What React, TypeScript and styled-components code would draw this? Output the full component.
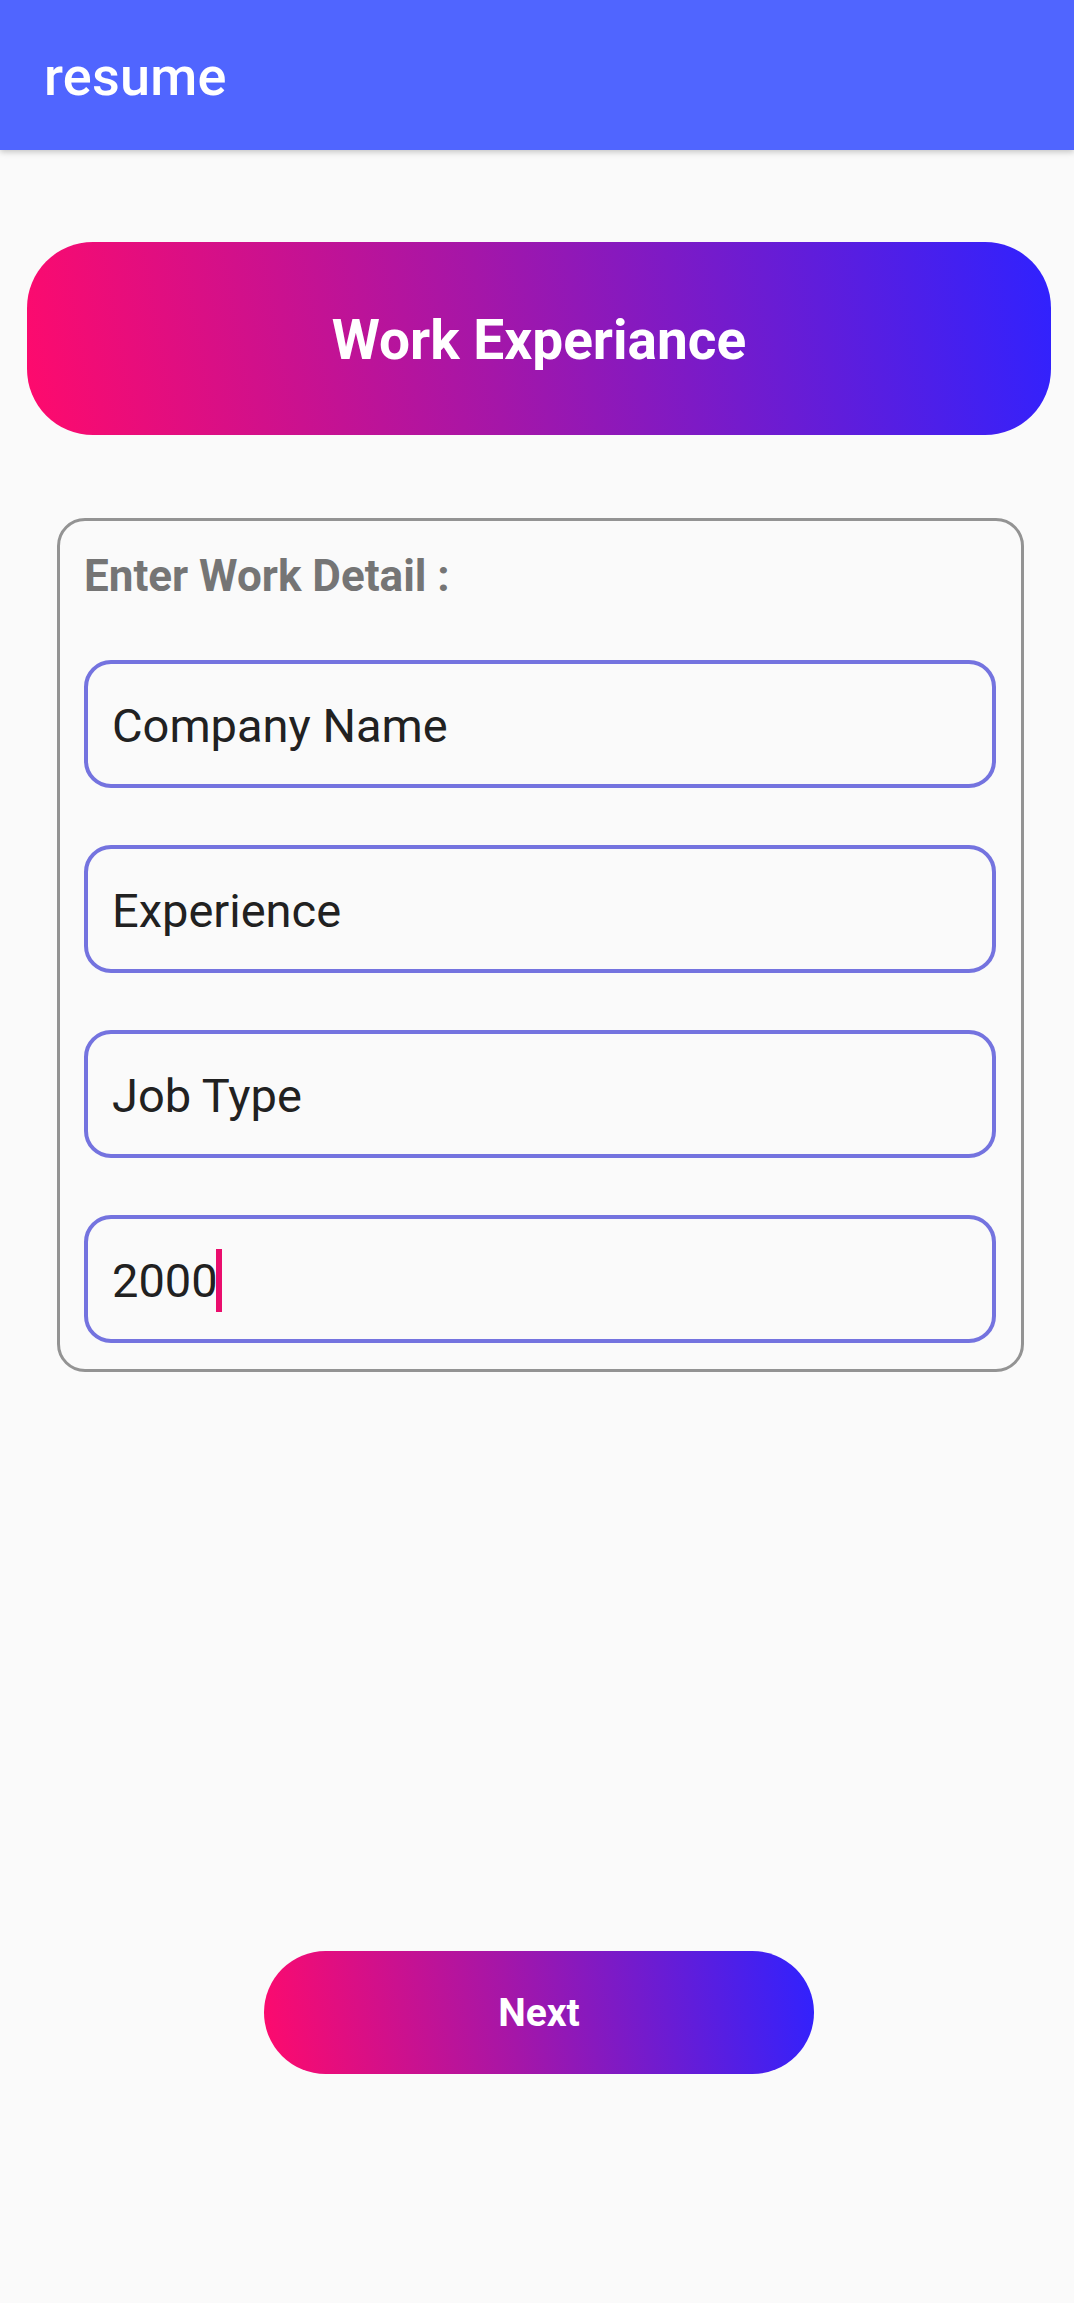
import React from 'react';
import styled, { createGlobalStyle } from 'styled-components';

const GlobalStyle = createGlobalStyle`
  html, body {
    margin: 0;
    padding: 0;
    background: #fafafa;
    font-family: Roboto, "Noto Sans", Arial, sans-serif;
  }
`;

const Screen = styled.div`
  min-height: 2303px;
  background: #fafafa;
  display: flex;
  flex-direction: column;
`;

const AppBar = styled.header`
  height: 150px;
  background: #5065ff;
  box-shadow: 0 2px 6px rgba(0, 0, 0, 0.22);
  display: flex;
  align-items: center;
  padding-left: 44px;
  padding-top: 2px;
  box-sizing: border-box;
`;

const AppTitle = styled.h1`
  margin: 0;
  color: #ffffff;
  font-size: 54px;
  font-weight: 500;
  letter-spacing: 0.2px;
`;

const Content = styled.main`
  display: flex;
  flex-direction: column;
  align-items: center;
  padding: 92px 23px 0 27px;
`;

const gradient = `linear-gradient(80deg, #ff0a6c 0%, #a516a8 45%, #2f22ff 100%)`;

const Banner = styled.div`
  width: 100%;
  height: 193px;
  border-radius: 66px;
  background: ${gradient};
  display: flex;
  align-items: center;
  justify-content: center;
  padding-top: 2px;
  box-sizing: border-box;
  color: #ffffff;
  font-size: 55px;
  font-weight: 700;
`;

const FormBox = styled.section`
  box-sizing: border-box;
  width: 967px;
  margin: 83px 0 0 3px;
  border: 3px solid #939393;
  border-radius: 28px;
  padding: 30px 25px 26px 24px;
  display: flex;
  flex-direction: column;
  gap: 58px;
`;

const FormLabel = styled.div`
  color: #757575;
  font-size: 44px;
  font-weight: 700;
  line-height: 51px;
`;

const Fields = styled.div`
  display: flex;
  flex-direction: column;
  gap: 57px;
`;

const Field = styled.div`
  box-sizing: border-box;
  height: 128px;
  border: 4px solid #7473df;
  border-radius: 27px;
  display: flex;
  align-items: center;
  padding: 2px 0 0 24px;
  font-size: 47px;
  color: #212121;
`;

const Caret = styled.span`
  display: inline-block;
  width: 6px;
  height: 63px;
  margin-left: -2px;
  background: #ea0d6d;
`;

const NextButton = styled.button`
  margin-top: 579px;
  width: 550px;
  height: 123px;
  border: none;
  border-radius: 62px;
  background: ${gradient};
  color: #ffffff;
  font-family: Roboto, "Noto Sans", Arial, sans-serif;
  font-size: 39px;
  font-weight: 700;
  cursor: pointer;
`;

const fields = ['Company Name', 'Experience', 'Job Type'];

const App: React.FC = () => {
  return (
    <Screen>
      <GlobalStyle />
      <AppBar>
        <AppTitle>resume</AppTitle>
      </AppBar>
      <Content>
        <Banner>Work Experiance</Banner>
        <FormBox>
          <FormLabel>Enter Work Detail :</FormLabel>
          <Fields>
            {fields.map((f) => (
              <Field key={f}>{f}</Field>
            ))}
            <Field>
              2000
              <Caret />
            </Field>
          </Fields>
        </FormBox>
        <NextButton>Next</NextButton>
      </Content>
    </Screen>
  );
};

export default App;
